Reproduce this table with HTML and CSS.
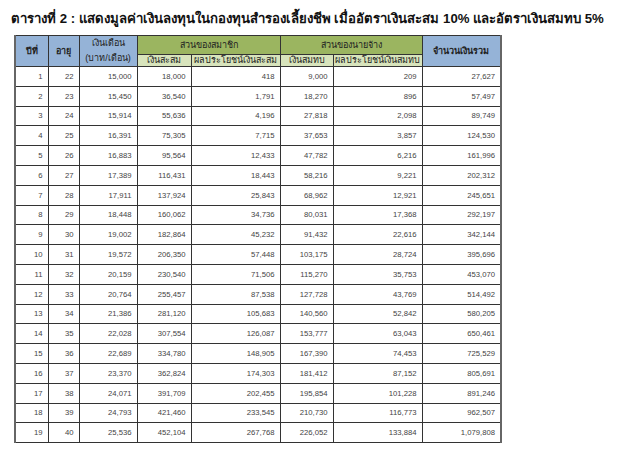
FILE: index.html
```html
<!DOCTYPE html>
<html lang="th">
<head>
<meta charset="utf-8">
<link rel="stylesheet" href="styles.css">
</head>
<body>
<h1 class="title">ตารางที่ 2 : แสดงมูลค่าเงินลงทุนในกองทุนสำรองเลี้ยงชีพ เมื่ออัตราเงินสะสม 10% และอัตราเงินสมทบ 5%</h1>
<table class="grid">
<colgroup>
<col class="c1"><col class="c2"><col class="c3"><col class="c4"><col class="c5"><col class="c6"><col class="c7"><col class="c8">
</colgroup>
<thead>
<tr class="h1">
<th rowspan="2" class="blue">ปีที่</th>
<th rowspan="2" class="blue">อายุ</th>
<th rowspan="2" class="blue salary"><span class="l1">เงินเดือน</span><span class="l2">(บาท/เดือน)</span></th>
<th colspan="2" class="olive">ส่วนของสมาชิก</th>
<th colspan="2" class="olive">ส่วนของนายจ้าง</th>
<th rowspan="2" class="blue">จำนวนเงินรวม</th>
</tr>
<tr class="h2">
<th class="lgreen">เงินสะสม</th>
<th class="lgreen">ผลประโยชน์เงินสะสม</th>
<th class="lgreen">เงินสมทบ</th>
<th class="lgreen">ผลประโยชน์เงินสมทบ</th>
</tr>
</thead>
<tbody>
<tr><td>1</td><td>22</td><td>15,000</td><td>18,000</td><td>418</td><td>9,000</td><td>209</td><td>27,627</td></tr>
<tr><td>2</td><td>23</td><td>15,450</td><td>36,540</td><td>1,791</td><td>18,270</td><td>896</td><td>57,497</td></tr>
<tr><td>3</td><td>24</td><td>15,914</td><td>55,636</td><td>4,196</td><td>27,818</td><td>2,098</td><td>89,749</td></tr>
<tr><td>4</td><td>25</td><td>16,391</td><td>75,305</td><td>7,715</td><td>37,653</td><td>3,857</td><td>124,530</td></tr>
<tr><td>5</td><td>26</td><td>16,883</td><td>95,564</td><td>12,433</td><td>47,782</td><td>6,216</td><td>161,996</td></tr>
<tr><td>6</td><td>27</td><td>17,389</td><td>116,431</td><td>18,443</td><td>58,216</td><td>9,221</td><td>202,312</td></tr>
<tr><td>7</td><td>28</td><td>17,911</td><td>137,924</td><td>25,843</td><td>68,962</td><td>12,921</td><td>245,651</td></tr>
<tr><td>8</td><td>29</td><td>18,448</td><td>160,062</td><td>34,736</td><td>80,031</td><td>17,368</td><td>292,197</td></tr>
<tr><td>9</td><td>30</td><td>19,002</td><td>182,864</td><td>45,232</td><td>91,432</td><td>22,616</td><td>342,144</td></tr>
<tr><td>10</td><td>31</td><td>19,572</td><td>206,350</td><td>57,448</td><td>103,175</td><td>28,724</td><td>395,696</td></tr>
<tr><td>11</td><td>32</td><td>20,159</td><td>230,540</td><td>71,506</td><td>115,270</td><td>35,753</td><td>453,070</td></tr>
<tr><td>12</td><td>33</td><td>20,764</td><td>255,457</td><td>87,538</td><td>127,728</td><td>43,769</td><td>514,492</td></tr>
<tr><td>13</td><td>34</td><td>21,386</td><td>281,120</td><td>105,683</td><td>140,560</td><td>52,842</td><td>580,205</td></tr>
<tr><td>14</td><td>35</td><td>22,028</td><td>307,554</td><td>126,087</td><td>153,777</td><td>63,043</td><td>650,461</td></tr>
<tr><td>15</td><td>36</td><td>22,689</td><td>334,780</td><td>148,905</td><td>167,390</td><td>74,453</td><td>725,529</td></tr>
<tr><td>16</td><td>37</td><td>23,370</td><td>362,824</td><td>174,303</td><td>181,412</td><td>87,152</td><td>805,691</td></tr>
<tr><td>17</td><td>38</td><td>24,071</td><td>391,709</td><td>202,455</td><td>195,854</td><td>101,228</td><td>891,246</td></tr>
<tr><td>18</td><td>39</td><td>24,793</td><td>421,460</td><td>233,545</td><td>210,730</td><td>116,773</td><td>962,507</td></tr>
<tr><td>19</td><td>40</td><td>25,536</td><td>452,104</td><td>267,768</td><td>226,052</td><td>133,884</td><td>1,079,808</td></tr>
</tbody>
</table>
</body>
</html>
```
FILE: styles.css
```css
html, body {
  margin: 0;
  padding: 0;
  background: #ffffff;
}
body {
  font-family: "Liberation Sans", Arial, sans-serif;
}
.title {
  margin: 0;
  padding: 10px 0 0 11px;
  height: 35px;
  box-sizing: border-box;
  font-size: 13.2px;
  font-weight: bold;
  color: #111;
  white-space: nowrap;
  line-height: 17px;
  font-family: "Liberation Sans", Arial, sans-serif;
}
.grid {
  margin-left: 14px;
  border-collapse: collapse;
  table-layout: fixed;
  width: 488px;
  border-left: 2px solid #666;
  border-right: 2px solid #666;
  font-family: "Liberation Sans", Arial, sans-serif;
}
.c1 { width: 33px; }
.c2 { width: 31px; }
.c3 { width: 58px; }
.c4 { width: 54px; }
.c5 { width: 89px; }
.c6 { width: 53px; }
.c7 { width: 89px; }
.c8 { width: 79px; }
.grid th {
  border: 1px solid #333;
  font-weight: normal;
  font-size: 9px;
  color: #222;
  padding: 0;
  font-family: "Liberation Sans", Arial, sans-serif;
  white-space: nowrap;
}
.grid th.blue { background: #95b3d7; font-weight: bold; }
.grid th.olive { background: #9bb560; }
.grid th.lgreen { background: #d8e4bc; }
.h1 { height: 19px; }
.h2 { height: 12px; }
.h1 th { line-height: 14px; }
.h2 th { line-height: 11px; }
.salary .l1, .salary .l2 { display: block; line-height: 15px; }
.grid th.salary { font-weight: normal; }
.grid td {
  border: 1px solid #333;
  height: 18.8px;
  padding: 0 5px 0 0;
  text-align: right;
  font-size: 7.7px;
  color: #444;
  white-space: nowrap;
  overflow: hidden;
}
```
